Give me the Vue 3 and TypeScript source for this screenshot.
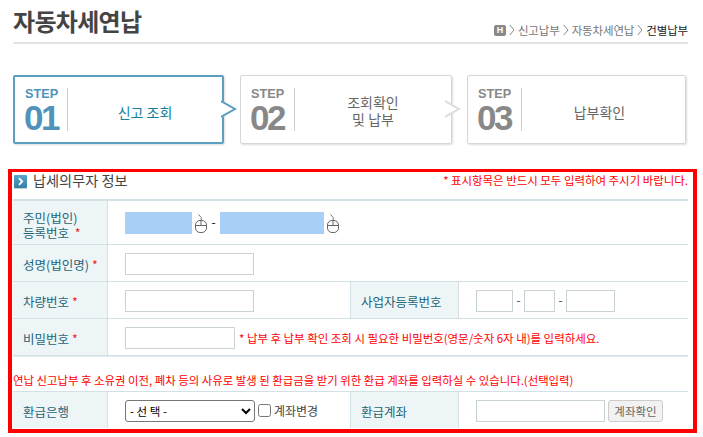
<script setup lang="ts">
const steps = [
  { no: '01', label: ['신고 조회'], active: true, arrow: true },
  { no: '02', label: ['조회확인', '및 납부'], active: false, arrow: true },
  { no: '03', label: ['납부확인'], active: false, arrow: false },
]
const crumbs = ['신고납부', '자동차세연납']
</script>

<template>
  <div class="page">
    <header class="head">
      <h1 class="title">자동차세연납</h1>
      <nav class="crumbs">
        <span class="home">H</span>
        <template v-for="c in crumbs" :key="c">
          <svg class="chev" viewBox="0 0 6 12" width="6" height="12"><path d="M.8 1 5 6 .8 11" fill="none" stroke="#888" stroke-width="1" /></svg>
          <span>{{ c }}</span>
        </template>
        <svg class="chev" viewBox="0 0 6 12" width="6" height="12"><path d="M.8 1 5 6 .8 11" fill="none" stroke="#888" stroke-width="1" /></svg>
        <span class="cur">건별납부</span>
      </nav>
    </header>

    <div class="steps">
      <div v-for="s in steps" :key="s.no" class="step" :class="{ active: s.active }">
        <div class="badge">
          <span class="word">STEP</span>
          <span class="no">{{ s.no }}</span>
        </div>
        <div class="label">
          <div v-for="l in s.label" :key="l">{{ l }}</div>
        </div>
        <svg v-if="s.arrow" class="arrow" viewBox="0 0 16 18" width="16" height="18">
          <path d="M0 0 15 9 0 18Z" fill="#fff" />
          <path d="M0 1 14 9 0 17" fill="none" :stroke="s.active ? '#5a9cc0' : '#dcdcdc'" stroke-width="2" />
        </svg>
      </div>
    </div>

    <section class="frame">
      <div class="sec-head">
        <div class="sec-title">
          <svg class="sec-icon" viewBox="0 0 13 14" width="13" height="14">
            <defs>
              <linearGradient id="sec-g" x1="0" y1="0" x2="0" y2="1">
                <stop offset="0" stop-color="#5aa5cc" />
                <stop offset="1" stop-color="#337fa8" />
              </linearGradient>
            </defs>
            <rect width="13" height="13" rx="1" fill="url(#sec-g)" />
            <rect y="13" width="13" height="1" fill="#c4ccd0" />
            <path d="M5 3.2 8.2 6.5 5 9.8" fill="none" stroke="#fff" stroke-width="1.8" />
          </svg>
          <span>납세의무자 정보</span>
        </div>
        <div class="req">* 표시항목은 반드시 모두 입력하여 주시기 바랍니다.</div>
      </div>

      <div class="form">
        <div class="row r1">
          <div class="th">주민(법인)<br />등록번호 <i>*</i></div>
          <div class="td">
            <span class="inp hl w67"></span>
            <svg class="mouse" viewBox="0 0 12 19" width="12" height="19"><path d="M3.5.5 6.2 3.5V7" fill="none" stroke="#777" /><rect x=".5" y="6.5" width="11" height="12" rx="4.5" fill="#fff" stroke="#666" /><path d="M.7 11.5h10.6M6 7v4.5" stroke="#666" fill="none" /></svg>
            <span class="dash">-</span>
            <span class="inp hl w104"></span>
            <svg class="mouse" viewBox="0 0 12 19" width="12" height="19"><path d="M3.5.5 6.2 3.5V7" fill="none" stroke="#777" /><rect x=".5" y="6.5" width="11" height="12" rx="4.5" fill="#fff" stroke="#666" /><path d="M.7 11.5h10.6M6 7v4.5" stroke="#666" fill="none" /></svg>
          </div>
        </div>
        <div class="row r2">
          <div class="th">성명(법인명) <i>*</i></div>
          <div class="td"><span class="inp w129"></span></div>
        </div>
        <div class="row r2 split">
          <div class="th">차량번호 <i>*</i></div>
          <div class="td"><span class="inp w129"></span></div>
          <div class="th th2">사업자등록번호</div>
          <div class="td biz">
            <span class="inp w37"></span><span class="dash2">-</span>
            <span class="inp w31"></span><span class="dash2">-</span>
            <span class="inp w49"></span>
          </div>
        </div>
        <div class="row r2">
          <div class="th">비밀번호 <i>*</i></div>
          <div class="td">
            <span class="inp w110"></span>
            <span class="pw-note">* 납부 후 납부 확인 조회 시 필요한 비밀번호(영문/숫자 6자 내)를 입력하세요.</span>
          </div>
        </div>
        <div class="notice">연납 신고납부 후 소유권 이전, 폐차 등의 사유로 발생 된 환급금을 받기 위한 환급 계좌를 입력하실 수 있습니다.(선택입력)</div>
        <div class="row r2 split last">
          <div class="th">환급은행</div>
          <div class="td">
            <select class="sel"><option>- 선 택 -</option></select>
            <label class="chk"><input type="checkbox" /><span>계좌변경</span></label>
          </div>
          <div class="th th2">환급계좌</div>
          <div class="td biz">
            <span class="inp w129"></span>
            <button class="btn" type="button">계좌확인</button>
          </div>
        </div>
      </div>
    </section>
  </div>
</template>

<style>
html, body { margin: 0; background: #fff; overflow: hidden; }
</style>

<style scoped>
.page {
  width: 703px;
  height: 437px;
  box-sizing: border-box;
  padding-top: 1px;
  font-family: "Noto Sans CJK KR", "Liberation Sans", sans-serif;
  font-size: 12px;
  overflow: hidden;
}
.head {
  margin: 0 15px 0 13px;
  height: 41px;
  border-bottom: 2px solid #e4e4e4;
  display: flex;
  justify-content: space-between;
  align-items: flex-end;
}
.title {
  margin: 0 0 5px;
  font-size: 24px;
  line-height: 32px;
  font-weight: 700;
  letter-spacing: -0.7px;
  color: #444;
}
.crumbs {
  display: flex;
  align-items: center;
  gap: 3px;
  font-size: 11.5px;
  letter-spacing: -0.15px;
  color: #777;
  margin-bottom: 4px;
  line-height: 16px;
}
.home {
  width: 12px;
  height: 11px;
  border-radius: 2px;
  background: #888;
  color: #fff;
  font: 700 9px/11px "Liberation Sans", sans-serif;
  letter-spacing: 0;
  text-align: center;
}
.cur { color: #222; }
.steps {
  display: flex;
  gap: 16px;
  margin: 31px 0 0 13px;
}
.step {
  position: relative;
  width: 212px;
  height: 69px;
  box-sizing: border-box;
  border: 1px solid #d6d6d6;
  border-radius: 2px;
  box-shadow: 1px 1px 2px #ddd;
  display: flex;
  padding: 12px 0 0 10px;
  color: #666;
}
.step:nth-child(3) { width: 219px; margin-left: -1px; }
.step.active {
  width: 211px;
  border: 2px solid #5d9ec3;
  padding: 11px 0 0 10px;
  color: #15809c;
}
.badge {
  width: 43px;
  height: 43px;
  flex: none;
  border-right: 1px solid #ccc;
  display: flex;
  flex-direction: column;
  font-family: "Liberation Sans", sans-serif;
  font-weight: 700;
  color: #888;
}
.active .badge { width: 42px; color: #4f93ba; }
.word { font-size: 12.7px; line-height: 13px; letter-spacing: 0; }
.no { font-size: 35px; line-height: 30px; letter-spacing: -2.5px; margin: 2px 0 0 -1px; }
.label {
  flex: 1;
  margin-top: -12px;
  align-self: stretch;
  height: 67px;
  display: flex;
  flex-direction: column;
  justify-content: center;
  align-items: center;
  font-size: 14px;
  line-height: 17px;
  padding-top: 5px;
  box-sizing: border-box;
}
.step:nth-child(2) .label { padding-top: 2px; }
.step:nth-child(3) .label { padding-right: 8px; }
.arrow {
  position: absolute;
  right: -10px;
  top: 24px;
}
.active .arrow { right: -15px; top: 23px; }
.frame {
  margin: 25px 0 0 8px;
  width: 689px;
  height: 264px;
  box-sizing: border-box;
  border: 4px solid #f00;
  border-top-width: 3px;
  padding-left: 1px;
}
.sec-head {
  height: 27px;
  width: 675px;
  display: flex;
  justify-content: space-between;
  align-items: flex-start;
}
.sec-title {
  display: flex;
  align-items: center;
  gap: 6px;
  margin: -1px 0 0 1px;
  font-size: 14.2px;
  line-height: 18px;
  color: #444;
}
.sec-icon { margin-top: 4px; }
.req {
  font-size: 11.45px;
  line-height: 16px;
  color: #f00;
}
.form { width: 675px; border-top: 2px solid #d3e1e6; }
.row {
  display: flex;
  border-bottom: 1px solid #d3e1e6;
  height: 36px;
}
.r1 { height: 43px; }
.th {
  width: 95px;
  box-sizing: border-box;
  flex: none;
  padding: 2px 0 0 10px;
  background: #edf5f7;
  border-right: 1px solid #d3e1e6;
  color: #1d6477;
  font-size: 12.5px;
  line-height: 15px;
  display: flex;
  align-items: center;
  flex-wrap: wrap;
  align-content: center;
}
.r1 .th { display: block; padding-top: 5px; }
.th i { color: #e22; font-style: normal; margin-left: 3px; }
.td {
  flex: 1;
  display: flex;
  align-items: center;
  padding: 1px 0 0 17px;
}
.split > .td:nth-child(2) { flex: none; width: 242px; box-sizing: border-box; }
.th2 { width: 109px; border-left: 1px solid #d3e1e6; }
.inp {
  display: block;
  height: 22px;
  box-sizing: border-box;
  border: 1px solid #c9d3d6;
  background: #fff;
  flex: none;
}
.hl { background: #a8cff5; border-color: #a8cff5; }
.w67 { width: 67px; }
.w104 { width: 104px; }
.w129 { width: 129px; }
.w110 { width: 110px; }
.w37 { width: 37px; }
.w31 { width: 31px; }
.w49 { width: 49px; }
.mouse { flex: none; margin: 1px 0 0 3px; }
.dash { width: 13px; text-align: center; font-size: 12px; flex: none; margin-top: -3px; }
.dash2 { width: 11px; text-align: center; color: #444; flex: none; margin-top: -3px; }
.pw-note { margin-left: 4px; font-size: 11.45px; color: #f00; white-space: nowrap; }
.notice {
  height: 36px;
  box-sizing: border-box;
  border-top: 1px solid #e6edf0;
  border-bottom: 1px solid #d3e1e6;
  font-size: 11.4px;
  line-height: 16px;
  padding-top: 15px;
  color: #f00;
  white-space: nowrap;
}
.last { border-bottom: none; }
.sel {
  width: 130px;
  height: 22px;
  font-family: inherit;
  font-size: 11.5px;
  padding: 0;
  border: 1px solid #767676;
  border-radius: 3px;
  background: #fff;
  color: #000;
  flex: none;
}
.chk {
  display: flex;
  align-items: center;
  color: #444;
  font-size: 12px;
  margin-left: 3px;
  gap: 3px;
  white-space: nowrap;
}
.chk input { margin: 0; width: 13px; height: 13px; }
.btn {
  margin-left: 3px;
  width: 55px;
  height: 22px;
  padding: 0;
  font-family: inherit;
  font-size: 11.5px;
  color: #666;
  background: #f2f2f2;
  border: 1px solid #ccc;
  border-radius: 3px;
}
</style>
